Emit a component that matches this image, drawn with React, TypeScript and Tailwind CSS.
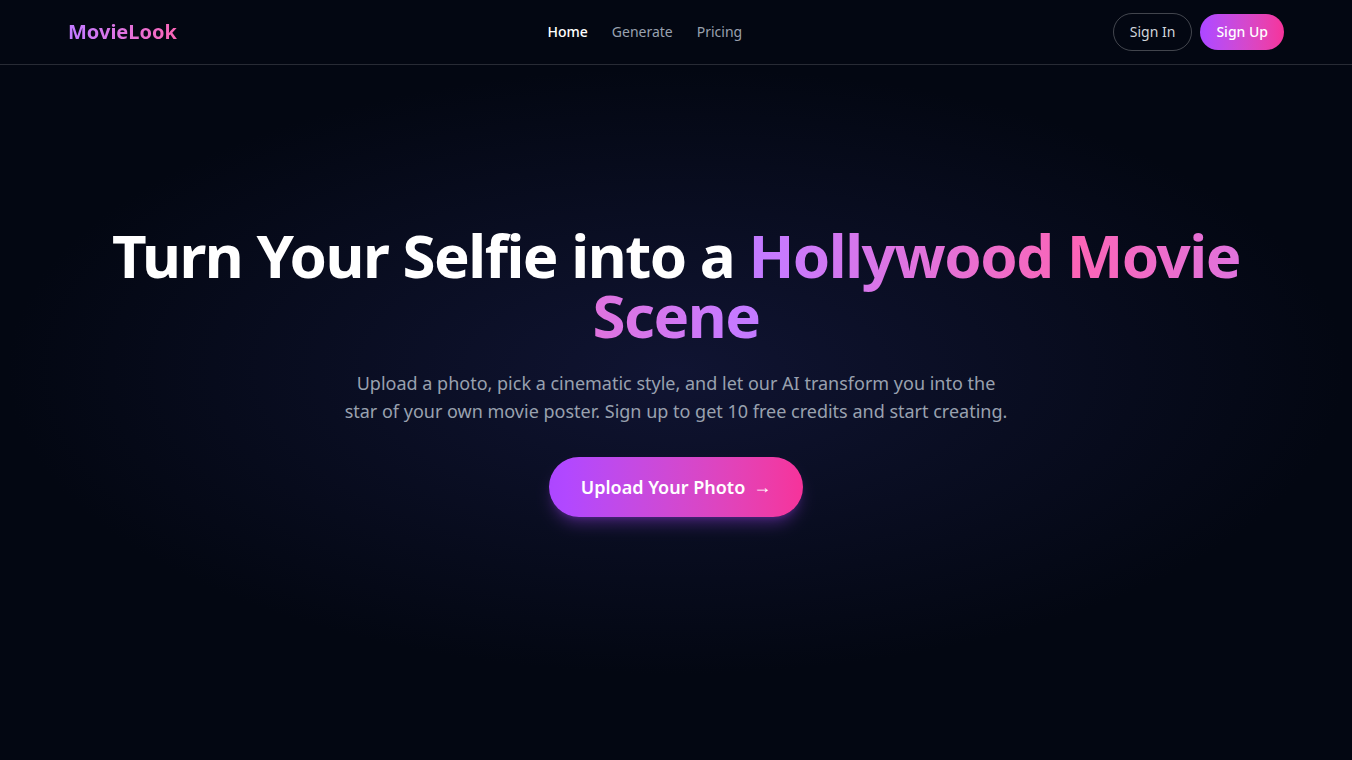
const navLinks = [
  { name: "Home", href: "#home", active: true },
  { name: "Generate", href: "#generate", active: false },
  { name: "Pricing", href: "#pricing", active: false },
]

function Header() {
  return (
    <header className="border-b border-white/15">
      <div className="max-w-7xl mx-auto px-8 h-16 flex items-center justify-between">
        <a
          href="#home"
          className="text-xl font-bold bg-gradient-to-r from-purple-400 to-pink-400 bg-clip-text text-transparent"
        >
          MovieLook
        </a>

        <nav className="flex items-center gap-6 text-sm">
          {navLinks.map((link) => (
            <a
              key={link.name}
              href={link.href}
              className={link.active ? "font-medium text-white" : "text-gray-400 hover:text-white"}
            >
              {link.name}
            </a>
          ))}
        </nav>

        <div className="flex items-center gap-2 text-sm">
          <button className="px-4 py-2 rounded-full border border-white/25 text-gray-300">Sign In</button>
          <button className="px-4 py-2 rounded-full font-medium text-white bg-gradient-to-r from-purple-500 to-pink-500">
            Sign Up
          </button>
        </div>
      </div>
    </header>
  )
}

function Hero() {
  return (
    <section className="px-8 py-40 text-center bg-[radial-gradient(ellipse_at_center,#101432_0%,transparent_70%)]">
      <h1 className="max-w-6xl mx-auto text-6xl font-bold tracking-tight">
        Turn Your Selfie into a{" "}
        <span className="bg-gradient-to-r from-purple-400 via-pink-400 to-purple-400 bg-clip-text text-transparent">
          Hollywood Movie Scene
        </span>
      </h1>

      <p className="mt-6 max-w-2xl mx-auto text-lg leading-7 text-gray-400">
        Upload a photo, pick a cinematic style, and let our AI transform you into the star of your own movie poster.
        Sign up to get 10 free credits and start creating.
      </p>

      <button className="mt-8 px-8 py-4 inline-flex items-center gap-2 rounded-full text-lg font-semibold text-white bg-gradient-to-r from-purple-500 to-pink-500 shadow-lg shadow-purple-500/30">
        Upload Your Photo
        <span aria-hidden="true" className="font-['Liberation_Serif',serif] font-normal">
          →
        </span>
      </button>
    </section>
  )
}

export default function App() {
  return (
    <div className="min-h-screen bg-gray-950 text-white font-['Noto_Sans',system-ui,sans-serif]">
      <Header />
      <main>
        <Hero />
      </main>
    </div>
  )
}
